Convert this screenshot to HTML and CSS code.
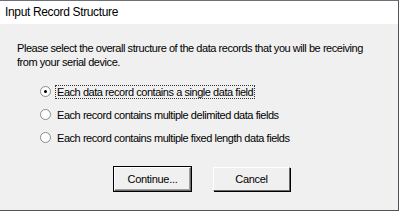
FILE: index.html
```html
<!DOCTYPE html>
<html lang="en">
  <head>
    <meta charset="utf-8">
    <title>Input Record Structure</title>
    <link rel="stylesheet" href="styles.css">
  </head>
  <body>
    <div class="window">
      <div class="titlebar">Input Record Structure</div>
      <div class="content">
        <p class="prompt">Please select the overall structure of the data records that you will be receiving from your serial device.</p>
        <div class="options">
          <div class="option">
            <span class="radio checked"></span>
            <span class="label focus">Each data record contains a single data field</span>
          </div>
          <div class="option">
            <span class="radio"></span>
            <span class="label">Each record contains multiple delimited data fields</span>
          </div>
          <div class="option">
            <span class="radio"></span>
            <span class="label">Each record contains multiple fixed length data fields</span>
          </div>
        </div>
        <div class="buttons">
          <button class="btn default">Continue...</button>
          <button class="btn">Cancel</button>
        </div>
      </div>
    </div>
  </body>
</html>
```

FILE: styles.css
```css
body {
  margin: 0;
  background: #ffffff;
}

.window {
  width: 398px;
  height: 209px;
  border-top: 1px solid #6b7079;
  border-right: 1px solid #4f555e;
  border-bottom: 1px solid #4f555e;
  display: flex;
  flex-direction: column;
}

.titlebar {
  height: 23px;
  background: #ffffff;
  font-family: "Liberation Sans", Arial, sans-serif;
  font-size: 12px;
  letter-spacing: -0.35px;
  color: #000000;
  padding-left: 5px;
  line-height: 22px;
}

.content {
  flex: 1;
  background: #f0f0f0;
  font-family: "Liberation Sans", Arial, sans-serif;
  font-size: 11px;
  letter-spacing: -0.45px;
  color: #000000;
  padding: 17px 0 0 17px;
}

.prompt {
  margin: 0;
  width: 360px;
  line-height: 14px;
}

.options {
  margin-top: 15px;
  margin-left: 23px;
  display: flex;
  flex-direction: column;
  gap: 8px;
}

.option {
  display: flex;
  align-items: center;
  height: 15px;
}

.radio {
  width: 11px;
  height: 11px;
  border-radius: 50%;
  background: #ffffff;
  border: 1px solid #8a8a8a;
  box-sizing: border-box;
  position: relative;
  margin-right: 4px;
}

.radio.checked::after {
  content: "";
  position: absolute;
  left: 3px;
  top: 3px;
  width: 3px;
  height: 3px;
  border-radius: 50%;
  background: #000000;
}

.label {
  padding: 0 1px;
  border: 1px dotted transparent;
}

.label.focus {
  border-color: #333333;
}

.buttons {
  margin-top: 22px;
  margin-left: 97px;
  display: flex;
  gap: 22px;
}

.btn {
  width: 77px;
  height: 24px;
  background: #f0f0f0;
  font-family: "Liberation Sans", Arial, sans-serif;
  font-size: 11px;
  letter-spacing: -0.3px;
  color: #000000;
  border: 1px solid;
  border-color: #ffffff #696969 #696969 #ffffff;
  box-shadow: 1px 1px 0 #000000;
  padding: 0;
}

.btn.default {
  outline: 1px solid #000000;
  box-shadow: inset -1px -1px 0 #a0a0a0;
}
```
